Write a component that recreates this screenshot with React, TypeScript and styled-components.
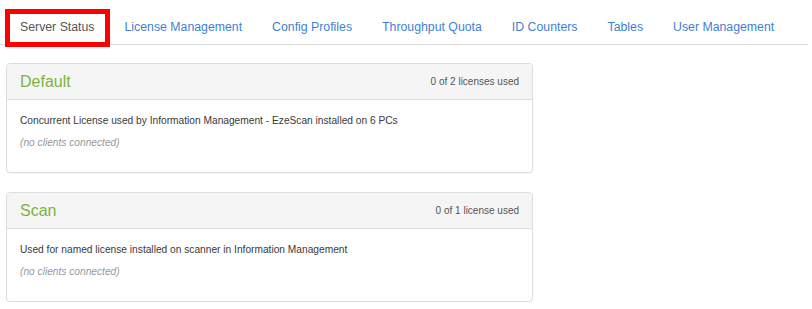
import React from 'react';
import styled, { createGlobalStyle } from 'styled-components';

const GlobalStyle = createGlobalStyle`
    body {
        margin: 0;
        background: #fff;
        font-family: "Liberation Sans", Arial, sans-serif;
        color: #333;
    }
`;

const Page = styled.div`
    width: 812px;
`;

const Nav = styled.ul`
    list-style: none;
    margin: 0 4px 0 0;
    padding: 0 0 0 5px;
    height: 44px;
    display: flex;
    align-items: flex-start;
    border-bottom: 1px solid #ddd;
`;

const Tab = styled.li<{ $active?: boolean }>`
    box-sizing: border-box;
    margin-top: 9px;
    height: 38px;
    display: flex;
    align-items: center;
    padding: ${(p) => (p.$active ? '0 10px 3px' : '5px 15px 8px')};
    border: ${(p) => (p.$active ? '5px solid #ff0000' : 'none')};
    background: ${(p) => (p.$active ? '#fff' : 'transparent')};
    font-size: 12.3px;
    color: ${(p) => (p.$active ? '#555' : '#3f7fd3')};
    white-space: nowrap;
    position: relative;
    z-index: ${(p) => (p.$active ? 1 : 0)};
`;

const Content = styled.div`
    padding: 18px 0 0 6px;
    display: grid;
    grid-template-columns: 527px;
    row-gap: 19px;
`;

const Panel = styled.section`
    border: 1px solid #ddd;
    border-radius: 4px;
    background: #fff;
    box-shadow: 0 1px 1px rgba(0, 0, 0, 0.04);
`;

const Heading = styled.header`
    height: 35px;
    display: flex;
    align-items: center;
    justify-content: space-between;
    padding: 0 13px;
    background: #f5f5f5;
    border-bottom: 1px solid #ddd;
    border-radius: 3px 3px 0 0;

    h3 {
        margin: 0;
        font-size: 16px;
        font-weight: 400;
        color: #7cb342;
    }

    span {
        font-size: 10px;
        color: #555;
    }
`;

const Body = styled.div`
    padding: 14px 13px 22px;
    font-size: 10.2px;
    line-height: 14px;
    color: #3a3a3a;

    p {
        margin: 0 0 8px;
    }
`;

const Empty = styled.div`
    font-style: italic;
    color: #999;
`;

const tabs = [
    'Server Status',
    'License Management',
    'Config Profiles',
    'Throughput Quota',
    'ID Counters',
    'Tables',
    'User Management',
];

const pools = [
    {
        name: 'Default',
        used: '0 of 2 licenses used',
        description:
            'Concurrent License used by Information Management - EzeScan installed on 6 PCs',
    },
    {
        name: 'Scan',
        used: '0 of 1 license used',
        description:
            'Used for named license installed on scanner in Information Management',
    },
];

export default function App() {
    return (
        <Page>
            <GlobalStyle />
            <Nav>
                {tabs.map((t, i) => (
                    <Tab key={t} $active={i === 0}>
                        {t}
                    </Tab>
                ))}
            </Nav>
            <Content>
                {pools.map((p) => (
                    <Panel key={p.name}>
                        <Heading>
                            <h3>{p.name}</h3>
                            <span>{p.used}</span>
                        </Heading>
                        <Body>
                            <p>{p.description}</p>
                            <Empty>(no clients connected)</Empty>
                        </Body>
                    </Panel>
                ))}
            </Content>
        </Page>
    );
}
